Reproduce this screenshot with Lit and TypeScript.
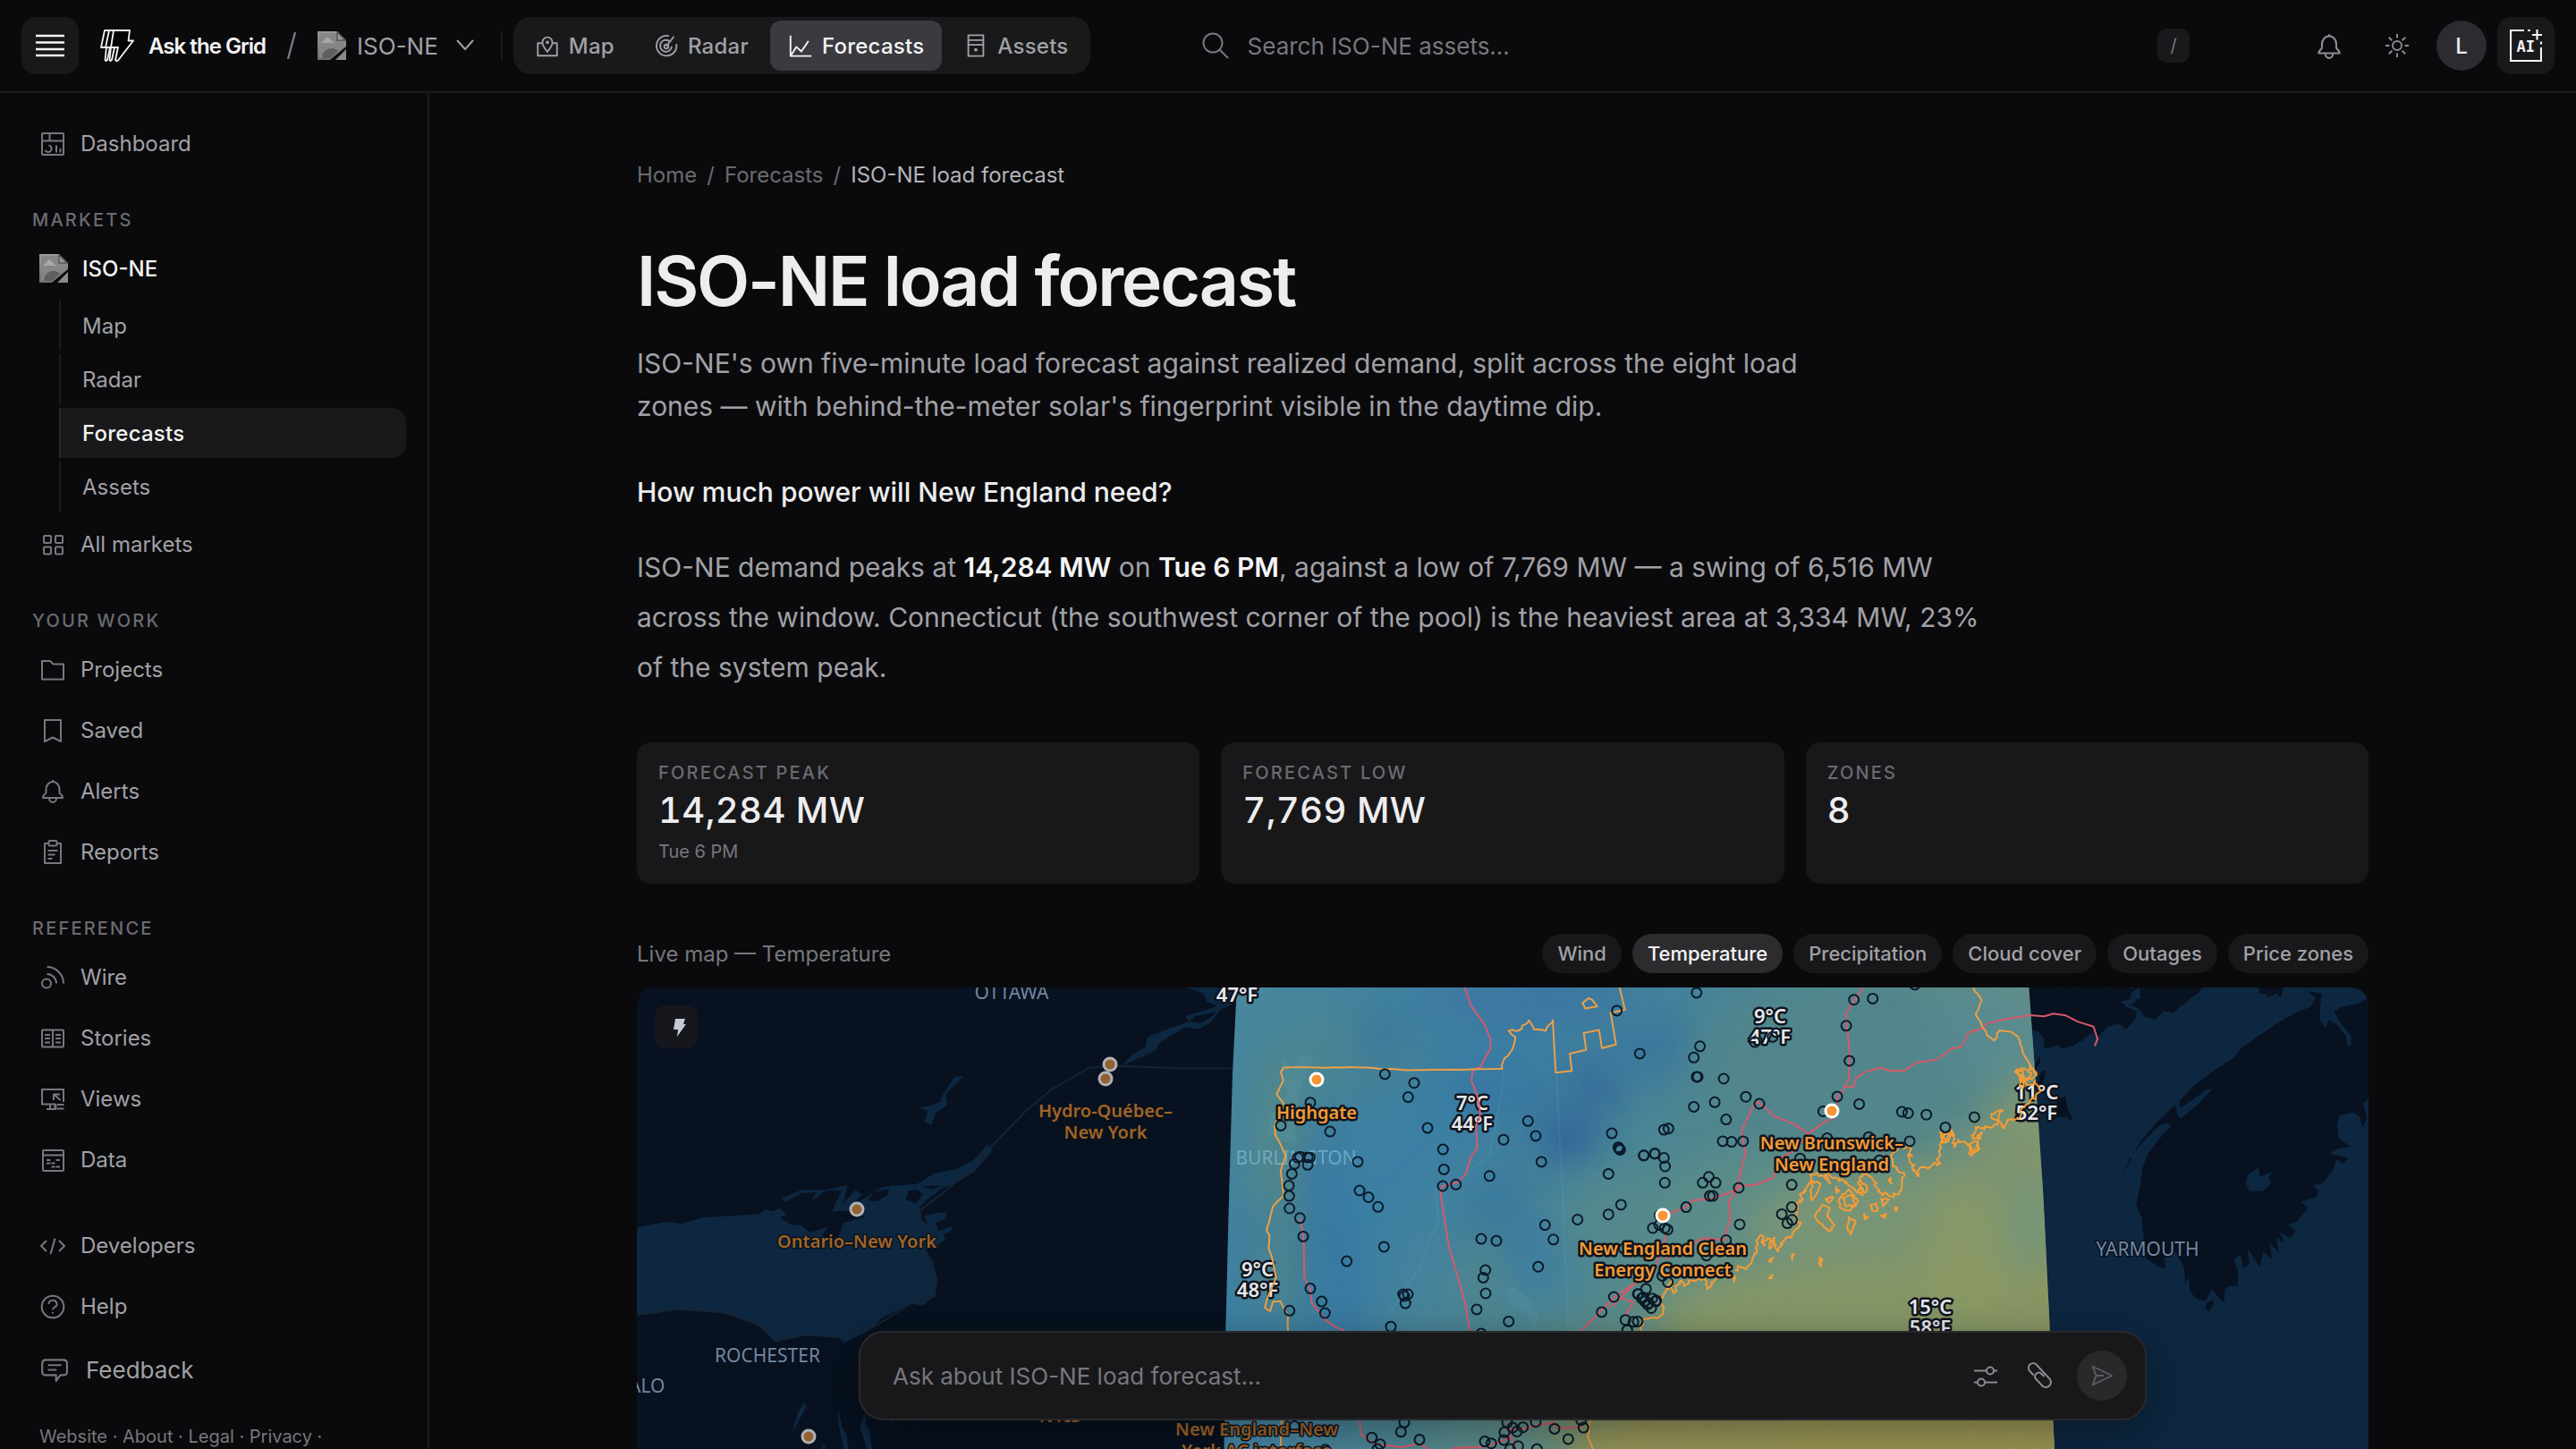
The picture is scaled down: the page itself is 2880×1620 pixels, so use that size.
import { LitElement, html, svg, css, nothing } from "lit";
import { customElement, state } from "lit/decorators.js";

/* ---------- icons ---------- */

const sideIcons: Record<string, unknown> = {
  dashboard: svg`<rect x="3" y="4" width="24" height="24" rx="1"/><path d="M3 12.500h24M11.500 4v8.500M10.500 17.500a3.800 3.800 0 1 1-4 5.500M19 17.500v8M23.500 21v4.500"/>`,
  grid: svg`<rect x="5" y="6" width="8" height="8" rx="1"/><rect x="18" y="6" width="8" height="8" rx="1"/><rect x="5" y="18.500" width="8" height="8" rx="1"/><rect x="18" y="18.500" width="8" height="8" rx="1"/>`,
  folder: svg`<path d="M3 6h9l3.500 3.500H27V26.500H3z"/>`,
  bookmark: svg`<path d="M6 4h18v24l-9-4.500L6 28z"/>`,
  bell: svg`<path d="M15 3v2M7.500 17v-3.500a7.500 8.500 0 0 1 15 0V17c0 2 3.500 2.500 3.500 6H4c0-3.500 3.500-4 3.500-6zM11 23.500a4 4.500 0 0 0 8 0"/>`,
  clipboard: svg`<path d="M10 6H6v22h18V6h-4"/><rect x="10.500" y="3" width="9" height="5.500" rx="1"/><path d="M9.500 14h11M9.500 18.500h8M9.500 23h5"/>`,
  wire: svg`<circle cx="8" cy="22.500" r="5"/><path d="M8.500 4A18.500 18.500 0 0 1 27 22.500M8.500 12A10.500 10.500 0 0 1 19 22.500"/>`,
  stories: svg`<rect x="3" y="6.500" width="24" height="19" rx="1"/><path d="M15 6.500v19M6 12h6M6 16h6M6 20.500h6M18 12h6M18 16h6M18 20.500h6"/>`,
  views: svg`<path d="M27 19V5H3v16.500h15.500M12 21.500V27M17.500 21.500V27M8 27h10.500v-5.500M20 22h7.500M20 26.500h7.500M23.500 17l-7-6.500M16 17v-6.500h7"/>`,
  data: svg`<rect x="4" y="5" width="23" height="23" rx="1"/><path d="M4 10.500h23M8 16h4.500M18.500 16h4.500M8 19.500h4.500M13.500 19.500h4M18.500 23.500h4.500M13.500 23.500h4"/>`,
  code: svg`<path d="M8 10l-6 6 6 6M22 10l6 6-6 6M17.500 7.500L12.500 25"/>`,
  help: svg`<circle cx="15" cy="16" r="12.300"/><path d="M10.500 13a4.500 4 0 1 1 6.500 3.400c-1.400.8-2 1.300-2 3M15 22v1.500"/>`,
  feedback: svg`<path d="M5 5h20q4 0 4 4v8q0 4-4 4h-3l-4.500 6v-6H7q-4 0-4-4V9q0-4 4-4M9 10.500h14M9 15.500h9"/>`,
};

const icon = (body: unknown, size = 30, cls = "ico") =>
  html`<svg class=${cls} width=${size} height=${size} viewBox="0 0 30 30" aria-hidden="true">${body}</svg>`;

const brokenImage = html`<svg class="broken" width="32" height="32" viewBox="0 0 32 32" aria-hidden="true">
  <defs><linearGradient id="bi" x1="0" y1="0" x2="0" y2="1"><stop offset="0" stop-color="#9a9a9a"/><stop offset="1" stop-color="#6f6f6f"/></linearGradient></defs>
  <path d="M0 0h22l10 10v7L14 32H0z" fill="url(#bi)"/>
  <path d="M32 20v12H20z" fill="#8a8a8a"/>
  <path d="M2 2h19v8h9v6L13 30H2z" fill="#868686"/>
  <path d="M4 13l7-7 8 7z" fill="#a8a8a8"/>
  <path d="M5 30c0-7 5-11 11-11 3 0 5 1 7 3l-9 8z" fill="#5f5f5f"/>
  <path d="M22 1v9h9z" fill="#9a9a9a" stroke="#555" stroke-width="1.500"/>
</svg>`;

/* ---------- map geometry ---------- */

type Tile = { x: number; y: number; sx: number; sy: number };
const WEST: Tile = { x: 700, y: 1030, sx: 2.24, sy: 2.657 };
const MID: Tile = { x: 1340, y: 1090, sx: 3, sy: 2.958 };
const COAST: Tile = { x: 1800, y: 1090, sx: 2.904, sy: 2.958 };
const EAST: Tile = { x: 2200, y: 1090, sx: 3, sy: 2.958 };

const nums = (s: string) => s.trim().split(/[\s,]+/).map(Number);

/** Projects "x,y x,y ..." from a tile into map space. */
function project(t: Tile, s: string): [number, number][] {
  const n = nums(s);
  const out: [number, number][] = [];
  for (let i = 0; i + 1 < n.length; i += 2) out.push([t.x + n[i] / t.sx, t.y + n[i + 1] / t.sy]);
  return out;
}

/** Breaks each segment into short uneven steps, for ragged shorelines. */
function roughen(p: [number, number][], amp: number, step: number): [number, number][] {
  let seed = 7;
  const rnd = () => ((seed = (seed * 16807) % 2147483647) / 2147483647) - 0.5;
  const out: [number, number][] = [p[0]];
  for (let i = 1; i < p.length; i++) {
    const [ax, ay] = p[i - 1];
    const [bx, by] = p[i];
    const n = Math.max(1, Math.round(Math.hypot(bx - ax, by - ay) / step));
    for (let k = 1; k < n; k++)
      out.push([ax + ((bx - ax) * k) / n + rnd() * amp, ay + ((by - ay) * k) / n + rnd() * amp]);
    out.push([bx, by]);
  }
  return out;
}

function line(t: Tile, s: string, opts: { close?: boolean; amp?: number; step?: number } = {}) {
  let p = project(t, s);
  if (opts.close) p = [...p, p[0]];
  if (opts.amp) p = roughen(p, opts.amp, opts.step ?? 4);
  return "M" + p.map(([x, y]) => `${x.toFixed(1)} ${y.toFixed(1)}`).join("L") + (opts.close ? "Z" : "");
}
const area = (t: Tile, s: string, amp = 0) => line(t, s, { close: true, amp, step: 5 });

const WATER = [
  area(WEST, "27,910 100,892 140,898 190,880 330,870 350,855 365,862 385,852 402,870 385,880 412,900 440,903 460,925 505,908 490,935 530,945 545,895 600,878 560,860 515,862 540,800 500,800 465,832 475,805 440,808 398,834 390,822 440,797 500,798 555,783 543,840 575,798 590,812 560,850 640,790 730,780 770,750 830,735 870,710 905,662 918,680 900,705 870,745 830,775 790,795 750,830 735,850 737,885 755,900 748,875 780,866 803,866 800,885 775,895 782,920 820,905 812,922 795,930 800,945 770,970 750,975 770,1015 778,1080 770,1115 745,1142 710,1135 640,1180 610,1215 545,1252 535,1240 500,1230 430,1232 375,1250 330,1200 250,1165 130,1155 27,1172"),
  area(WEST, "1240,430 1268,395 1300,375 1305,345 1360,318 1410,298 1400,282 1440,268 1480,252 1455,240 1445,215 1405,197 1568,197 1515,250 1490,262 1465,300 1435,320 1400,315 1335,362 1325,385"),
  area(WEST, "845,460 822,462 795,510 788,535 760,548 732,553 755,565 746,598 765,604 775,570 805,545 800,515"),
  area(WEST, "445,1428 430,1460 415,1522 428,1495 452,1440"),
  area(WEST, "530,1440 533,1500 545,1568 556,1568 553,1530 540,1500"),
  area(WEST, "600,1460 585,1500 603,1568 616,1568 608,1510 598,1490"),
  area(WEST, "652,1455 675,1506 668,1480"),
  area(WEST, "712,1460 735,1506 724,1478"),
  area(WEST, "495,1550 490,1568 500,1568"),
];
const ISLES = [
  area(WEST, "605,830 620,805 660,795 652,815 628,832"),
  area(WEST, "700,825 708,800 730,798 742,812 725,838"),
  area(WEST, "738,788 790,785 768,796"),
  area(WEST, "1412,297 1425,282 1480,268 1465,285 1440,303"),
];
const MARITIME_LAND = [
  area(EAST, "150,41 582,41 552,55 545,78 512,90 535,108 565,122 555,152 528,180 505,162 470,172 440,202 415,190 385,218 350,235 320,245 300,230 280,240 262,243 256,215 235,185 150,170", 3),
  area(EAST, "578,41 790,41 740,85 690,125 655,120 630,148 592,138 570,110 542,98 580,75", 2),
  area(EAST, "1140,55 1188,62 1182,100 1180,145 1200,178 1210,150 1240,165 1270,205 1272,235 1287,232 1285,200 1250,160 1228,122 1255,105 1310,95 1344,75 1344,410 1325,425 1340,470 1325,505 1312,465 1290,455 1245,465 1238,500 1245,540 1282,568 1240,575 1212,590 1245,600 1275,604 1262,624 1235,610 1225,645 1190,690 1155,695 1177,712 1170,735 1118,750 1140,770 1105,815 1072,828 1098,845 1085,870 1045,850 1062,888 1035,868 1042,918 1012,882 1020,940 992,915 978,965 955,930 938,905 945,955 925,970 915,925 893,940 907,985 905,1030 880,1028 862,1040 860,1082 835,1060 822,1038 795,1078 765,1070 745,1045 742,1000 730,1020 725,965 700,920 680,905 660,940 662,972 640,965 600,938 588,850 583,800 565,760 578,700 585,640 605,590 640,545 682,498 668,488 640,500 580,560 555,592 580,550 640,482 695,430 705,465 715,475 770,430 822,376 800,380 760,408 712,440 712,415 760,365 820,320 890,275 920,240 1030,165 1090,130 1150,105 1168,75"),
  area(EAST, "975,41 1060,41 1050,75 1035,60 1010,74 998,62 980,62"),
  area(EAST, "512,680 545,603 550,606 520,662"),
  area(EAST, "222,305 240,268 243,290 228,312"),
  area(EAST, "235,362 245,320 262,316 252,362"),
  area(EAST, "275,492 285,440 310,405 328,402 334,440 355,485 330,470 300,468"),
  area(EAST, "797,1105 800,1085 825,1073 822,1092 810,1114"),
];
const LAKE = area(EAST, "932,690 940,660 975,636 980,668 1025,648 1008,668 1017,690 990,714 945,716");

const BORDERS = [
  line(WEST, "918,665 1000,565 1065,500 1160,435 1240,430 1390,437 1525,437"),
  line(WEST, "27,1168 130,1150 240,1160 330,1198 380,1245 450,1228 535,1236 620,1205 720,1130 772,1115 778,1060 750,975 735,860 800,800 860,740 918,665"),
];

const PALE_WATER = [
  area(MID, "290,270 275,320 300,400 240,470 235,540 330,560 320,480 350,350 385,270 340,265 310,330"),
  area(MID, "1035,1040 1060,1030 1110,1070 1140,1120 1125,1165 1100,1115 1050,1095 1035,1075"),
];
const PALE_LINES = [
  line(MID, "795,710 805,820 770,880 740,970 700,1030 640,1120"),
  line(MID, "1200,330 1220,700 1240,1176"),
  line(MID, "1022,315 1015,400 975,600 900,655"),
];

const ORANGE = [
  line(MID, "300,1176 300,1130 285,1100 275,1080 250,1080 240,1112 222,1100 238,1050 260,1000 245,930 235,905 238,860 228,845 250,765 285,730 275,650 292,600 270,550 258,530 255,500 285,425 262,395 284,350 276,322 285,306 540,306 700,315 1020,311", { amp: 1, step: 9 }),
  line(MID, "1020,311 1022,285 1050,250 1062,205 1040,185 1070,185 1108,150 1125,180 1165,185 1188,148", { amp: 3, step: 4 }),
  line(MID, "1188,148 1198,323 1252,317 1245,260 1300,248 1292,192 1343,182 1353,242 1400,230 1382,125 1430,115 1412,41"),
  line(MID, "1288,93 1308,77 1320,82 1337,104 1297,111", { close: true }),
  line(MID, "278,1472 275,1568"),
  line(MID, "1315,1472 1306,1530 1322,1568", { amp: 2 }),
  line(COAST, "1180,41 1207,85 1187,130 1225,200 1247,217 1265,183 1300,187 1325,205 1340,255 1365,300 1385,335", { amp: 2, step: 5 }),
];
const SHORE = [
  line(COAST, "1365,300 1385,330 1350,350 1315,320 1340,312 1330,345 1355,365 1380,350 1398,385 1360,425 1330,450 1325,475 1290,480 1278,508 1265,485 1275,450 1238,460 1258,480 1240,505 1215,512 1185,505 1180,540 1208,520 1195,570 1175,597 1163,560 1130,545 1118,570 1108,512 1090,550 1072,520 1075,570 1065,625 1020,635 1002,665 972,615 978,575 940,570 912,600 930,640 955,655 940,715 905,730 870,715 850,670 820,660 805,690 822,728 780,700 730,670 700,660 715,690 690,665 650,660 640,700 615,745 605,800 620,820 595,850 570,870 545,915 535,870 520,905 510,870 500,895 492,860 475,880 470,920 445,965 405,975", { amp: 6, step: 3 }),
  line(COAST, "345,1005 315,1040 305,1005 255,1010 240,1030 232,1010 205,1052 200,1010 180,1050 165,1085 172,1112 160,1132 105,1142 103,1176", { amp: 5, step: 3 }),
  ...[
    "660,680 683,690 672,720 655,745 650,715",
    "665,800 690,760 712,770 705,800 728,830 710,847 680,820",
    "745,740 775,710 805,750 775,780 745,770",
    "755,735 785,730 795,760 765,765",
    "775,800 797,815 780,858 770,835",
    "815,680 835,700 830,720 812,705",
    "845,760 865,755 868,780 850,778",
    "880,740 905,742 885,765",
    "880,795 897,790 892,805",
    "926,768 933,770 931,780 925,778",
    "700,740 725,735 712,752",
    "515,945 530,935 523,950",
    "592,925 597,922 592,942",
    "680,935 690,940 685,965 679,955",
    "517,1003 527,992 524,1003",
    "402,995 408,1000 404,1013",
    "825,790 838,800 828,808",
    "905,680 912,670 915,690",
    "1320,312 1345,310 1370,325 1350,345 1325,330",
    "1332,345 1345,350 1340,375 1330,365",
    "1165,560 1190,550 1200,575 1175,590",
    "1075,530 1105,525 1100,550 1080,555",
    "735,700 745,712 735,720",
  ].map((s) => line(COAST, s, { close: true, amp: 3, step: 3 })),
];

const RED = [
  line(MID, "893,41 913,100 960,165 980,215 978,245 945,305 920,315 915,350 935,400 945,460 930,500 935,570 915,600 895,660 870,685 820,697 810,710 825,810 840,900 870,1000 893,1080 910,1176"),
  line(MID, "340,805 352,865 355,1000 375,1040 380,1085 425,1140 460,1165 490,1176"),
  line(MID, "1285,1176 1340,1120 1395,1065 1470,1015"),
  line(MID, "540,1472 545,1520 590,1550 680,1562 740,1550 770,1568"),
  line(MID, "850,1565 960,1560 1050,1530 1035,1480"),
  line(MID, "1030,1505 1090,1500 1190,1480 1205,1500 1285,1495"),
  line(MID, "1050,1530 1065,1568"),
  line(COAST, "822,41 795,80 765,130 770,180 778,260 775,345 755,385 737,405 735,460 720,475 690,490 645,525 600,495 530,465 500,435 480,420 465,435 427,515 440,590 415,690 418,705 385,750 390,800 372,877 300,870 180,940"),
  line(COAST, "760,370 790,370 800,340 835,318 880,307 910,317 955,317 995,290 1060,280 1110,243 1140,238 1165,190 1212,175 1225,160 1280,147 1362,133 1410,137 1440,128 1480,134 1520,155 1570,171 1583,212 1574,235"),
  line(COAST, "172,797 247,768 270,745 330,740 400,715 418,700 480,692 530,670 545,610 600,580 645,525"),
  line(COAST, "180,850 175,890 150,960 85,1015 35,1068 0,1100"),
  line(COAST, "35,1068 75,1082 50,1130"),
];

const PLANTS_MID = nums(`375,422 276,498 441,518 625,328 723,357 703,404 768,506 820,577 823,643 819,698 863,693
 341,601 333,604 373,604 366,603 366,628 322,625 313,658 303,697 304,731 305,772 340,804 351,865 534,618 540,713 570,735 602,767
 622,899 497,947 375,1037 413,1080 424,1118 305,1110 686,1056 702,1056 694,1086 690,1062 645,1163 1105,483 1131,532 1023,545
 1150,618 976,665 948,873 999,879 962,976 955,1001 963,1053 933,1106 1040,1146 948,1186 1162,827 1190,875 1139,965 1271,809
 1375,792 1417,760 1375,658 1386,524 1408,570 1414,578 1410,574 1493,597 1403,118 1480,260 1352,1115 1393,1065 1473,1055
 322,1492 425,1508 425,1570 581,1530 609,1552 600,1568 679,1511 690,1480 741,1537 960,1543 982,1549 1026,1512 1024,1538 1035,1480
 1053,1497 1088,1496 1068,1510 1072,1558 1045,1568 1131,1478 1135,1568 1194,1501 1240,1535 1291,1497 1283,1472`);
const PLANTS_COAST = nums(`281,59 292,236 272,273 281,337 285,337 369,343 272,436 340,421 377,478 441,403 485,426 738,402 692,451 809,427
 948,453 968,457 1027,462 1183,470 1089,504 973,550 792,82 853,78 767,168 777,284 990,32 470,222 528,205 175,512 190,508 110,597
 146,591 145,591 175,605 179,633 178,687 366,550 395,552 432,550 321,668 301,687 343,687 324,731 334,731 418,704 247,768 421,825
 377,877 590,694 590,768 558,791 576,821 591,810 139,837 160,827 178,837 187,842 161,795 705,540 840,536 617,607 875,613
 313,928 45,905 170,995 188,1016 117,1038 92,1055 103,1070 113,1080 122,1090 134,1102 148,1080 137,1070 150,1077 126,1085
 108,1066 50,1141 76,1147 90,1146 56,1175`);
const plants: [number, number][] = [];
for (const [t, l] of [[MID, PLANTS_MID], [COAST, PLANTS_COAST]] as [Tile, number[]][])
  for (let i = 0; i + 1 < l.length; i += 2) plants.push([t.x + l[i] / t.sx, t.y + l[i + 1] / t.sy]);

const HEAT_EDGE = "M1383 1100L1378 1200L1374 1340L1370 1500L1367 1760H2304L2296 1600L2291 1470L2284 1330L2276 1210L2268 1100Z";
const BLOBS: [number, number, number, number, string, number][] = [
  [1500, 1180, 90, 50, "#56877f", 0.35],
  [1430, 1330, 36, 150, "#5b8a80", 0.65],
  [1400, 1380, 24, 40, "#3a7ba2", 0.6],
  [1475, 1345, 22, 80, "#3272a5", 0.6],
  [1505, 1460, 24, 70, "#3375a6", 0.6],
  [1545, 1160, 26, 40, "#336fa0", 0.5],
  [1700, 1120, 120, 26, "#3b6fa0", 0.6],
  [1680, 1220, 60, 34, "#3671a2", 0.5],
  [1752, 1272, 34, 32, "#2f629a", 0.85],
  [1785, 1215, 34, 34, "#31669b", 0.7],
  [1850, 1170, 50, 40, "#36729f", 0.6],
  [1675, 1360, 34, 60, "#34739f", 0.6],
  [1720, 1410, 50, 50, "#3a7ba4", 0.6],
  [1660, 1420, 20, 50, "#5a8a80", 0.6],
  [1810, 1370, 60, 60, "#578a8b", 0.7],
  [2060, 1200, 170, 110, "#51858c", 0.9],
  [2230, 1150, 80, 60, "#568a92", 0.8],
  [2000, 1350, 150, 60, "#5c8c88", 0.9],
  [2140, 1370, 190, 60, "#7d9674", 0.9],
  [2080, 1480, 230, 70, "#869767", 0.95],
  [2210, 1400, 60, 70, "#8f9a62", 0.7],
  [2262, 1370, 22, 60, "#6f9580", 0.7],
  [1790, 1560, 110, 60, "#759272", 0.8],
  [2050, 1620, 300, 60, "#9a9552", 0.95],
  [1900, 1600, 100, 40, "#95935a", 0.8],
  [1420, 1600, 50, 40, "#4c88a5", 0.8],
  [1660, 1600, 60, 40, "#5e8c88", 0.6],
];

const ties: { x: number; y: number; lit: boolean }[] = [
  { x: 1472, y: 1207, lit: true },
  { x: 2048, y: 1242, lit: true },
  { x: 1859, y: 1359, lit: true },
  { x: 1241, y: 1190, lit: false },
  { x: 1236, y: 1206, lit: false },
  { x: 958, y: 1352, lit: false },
  { x: 904, y: 1606, lit: false },
];
const tieLabels: { x: number; y: number; lines: string[]; lit: boolean }[] = [
  { x: 1472, y: 1251, lines: ["Highgate"], lit: true },
  { x: 2048, y: 1285, lines: ["New Brunswick–", "New England"], lit: true },
  { x: 1859, y: 1403, lines: ["New England Clean", "Energy Connect"], lit: true },
  { x: 1236, y: 1249, lines: ["Hydro-Québec–", "New York"], lit: false },
  { x: 958, y: 1395, lines: ["Ontario–New York"], lit: false },
  { x: 1185, y: 1590, lines: ["NYIS"], lit: false },
  { x: 1405, y: 1605, lines: ["New England–New", "York AC interface"], lit: false },
];
const cities: { x: number; y: number; name: string }[] = [
  { x: 1131, y: 1117, name: "OTTAWA" },
  { x: 858, y: 1523, name: "ROCHESTER" },
  { x: 698, y: 1557, name: "BUFFALO" },
  { x: 2401, y: 1404, name: "YARMOUTH" },
];
const temps: { x: number; y: number; c: string; f: string }[] = [
  { x: 1383, y: 1097, c: "8°C", f: "47°F" },
  { x: 1646, y: 1241, c: "7°C", f: "44°F" },
  { x: 1979, y: 1144, c: "9°C", f: "47°F" },
  { x: 2277, y: 1229, c: "11°C", f: "52°F" },
  { x: 1406, y: 1427, c: "9°C", f: "48°F" },
  { x: 2158, y: 1469, c: "15°C", f: "58°F" },
];

@customElement("weather-map")
export class WeatherMap extends LitElement {
  static styles = css`
    :host { display: block; position: relative; overflow: hidden; border-radius: 20px; background: #07111f; }
    .canvas { display: block; width: 100%; height: auto; }
    .water { fill: #0d2740; }
    .land { fill: #07111f; }
    .border { fill: none; stroke: #172333; stroke-width: 2; }
    .pale { fill: #6fb4c4; opacity: 0.13; }
    .paleline { fill: none; stroke: #7fc0d8; stroke-width: 2; opacity: 0.1; }
    .orange { fill: none; stroke: #ec9f47; stroke-width: 2; stroke-linejoin: round; }
    .shore { fill: none; stroke: #f79c35; stroke-width: 2; stroke-linejoin: round; }
    .red { fill: none; stroke: #d7596b; stroke-width: 2; stroke-linejoin: round; }
    .plant { fill: none; stroke: #0a1a2a; stroke-width: 2; }
    .tie { fill: #f79433; stroke: #fff; stroke-width: 3; }
    .tie.dim { fill: #93602f; stroke: #adb2b9; }
    text { font-family: "Noto Sans", "Open Sans", sans-serif; letter-spacing: 0; text-anchor: middle; paint-order: stroke; stroke-linejoin: round; }
    .city { font-size: 21px; fill: #75869f; stroke: #07111f; stroke-width: 3; }
    .city.faded { fill: #7ab8d0; stroke: none; opacity: 0.75; }
    .temp { font-size: 22px; font-weight: 600; fill: #e6e9ee; stroke: #10141c; stroke-width: 5; }
    .tielabel { font-size: 20px; font-weight: 600; fill: #f79a36; stroke: #11151b; stroke-width: 5; }
    .tielabel.dim { fill: #a06428; stroke: #0b121b; stroke-width: 3; }
    .tool { position: absolute; top: 20px; left: 20px; width: 48px; height: 48px; padding: 0; border: 0; border-radius: 12px; background: #15171c; display: grid; place-items: center; }
  `;
  render() {
    return html`
      <svg class="canvas" viewBox="712 1104 1936 640" role="img" aria-label="Temperature map">
        <defs>
          <clipPath id="heat"><path d=${HEAT_EDGE} /></clipPath>
          <filter id="soft" x="-100%" y="-100%" width="300%" height="300%"><feGaussianBlur stdDeviation="20" /></filter>
          <linearGradient id="base" x1="0" y1="0" x2="1" y2="0.6">
            <stop offset="0" stop-color="#4a889c" /><stop offset="0.3" stop-color="#3c7fa4" />
            <stop offset="0.55" stop-color="#51888f" /><stop offset="0.8" stop-color="#7d9674" /><stop offset="1" stop-color="#98955a" />
          </linearGradient>
        </defs>
        ${WATER.map((d) => svg`<path class="water" d=${d} />`)}
        ${ISLES.map((d) => svg`<path class="land" d=${d} />`)}
        <rect class="water" x="2255" y="1104" width="400" height="640" />
        ${MARITIME_LAND.map((d) => svg`<path class="land" d=${d} />`)}
        <path class="water" d=${LAKE} />
        ${BORDERS.map((d) => svg`<path class="border" d=${d} />`)}
        <g clip-path="url(#heat)">
          <rect x="1360" y="1100" width="950" height="650" fill="url(#base)" />
          ${BLOBS.map(([x, y, rx, ry, c, o]) => svg`<ellipse cx=${x} cy=${y} rx=${rx} ry=${ry} fill=${c} opacity=${o} filter="url(#soft)" />`)}
          ${PALE_WATER.map((d) => svg`<path class="pale" d=${d} />`)}
          ${PALE_LINES.map((d) => svg`<path class="paleline" d=${d} />`)}
        </g>
        <text class="city faded" x="1449" y="1302">BURLINGTON</text>
        ${cities.map((c) => svg`<text class="city" x=${c.x} y=${c.y}>${c.name}</text>`)}
        ${temps.map((t) => svg`<text class="temp" x=${t.x} y=${t.y}>${t.c}</text><text class="temp" x=${t.x} y=${t.y + 23}>${t.f}</text>`)}
        ${RED.map((d) => svg`<path class="red" d=${d} />`)}
        ${ORANGE.map((d) => svg`<path class="orange" d=${d} />`)}
        ${SHORE.map((d) => svg`<path class="shore" d=${d} />`)}
        ${plants.map(([x, y]) => svg`<circle class="plant" cx=${x.toFixed(1)} cy=${y.toFixed(1)} r="5.500" />`)}
        ${ties.map((t) => svg`<circle class="tie ${t.lit ? "" : "dim"}" cx=${t.x} cy=${t.y} r="7" />`)}
        ${tieLabels.map((l) => l.lines.map((s, i) => svg`<text class="tielabel ${l.lit ? "" : "dim"}" x=${l.x} y=${l.y + i * 24}>${s}</text>`))}
      </svg>
      <button class="tool" aria-label="Grid layers">
        <svg width="24" height="24" viewBox="0 0 24 24" aria-hidden="true"><path d="M11 3h11l-2 6h3L13 23l1-8H9z" fill="#c3c9d4" /></svg>
      </button>
    `;
  }
}

/* ---------- page ---------- */

const tabs = [
  { name: "Map", body: svg`<path d="M8 12H3.500v15h23V12H22M15 22.500c-4-5-6-7.500-6-11a6 6.500 0 0 1 12 0c0 3.500-2 6-6 11z"/><circle cx="15" cy="11" r="1"/>` },
  { name: "Radar", body: svg`<path d="M18 3.500A12 12 0 1 0 27 13M18.500 9.500A7 7 0 1 0 21.500 16M15 16L24 4"/><circle cx="15" cy="16" r="2.500"/>` },
  { name: "Forecasts", body: svg`<path d="M3 3v24.500h25M4 26l6-9.500 6 5.500L24.500 9.500"/>` },
  { name: "Assets", body: svg`<path d="M6 2.500h18v25H6zM6 8.500h18M6 14h18"/><circle cx="15" cy="20" r="1"/>` },
];
const layers = ["Wind", "Temperature", "Precipitation", "Cloud cover", "Outages", "Price zones"];
const stats = [
  { label: "Forecast peak", value: "14,284 MW", note: "Tue 6 PM" },
  { label: "Forecast low", value: "7,769 MW", note: "" },
  { label: "Zones", value: "8", note: "" },
];

@customElement("app-root")
export class AppRoot extends LitElement {
  @state() private layer = "Temperature";

  static styles = css`
    :host {
      display: grid; grid-template-rows: auto minmax(0, 1fr); height: 100vh; overflow: hidden;
      background: #0a0a0c; color: #a1a1a6; font-family: Inter, "Liberation Sans", sans-serif; font-size: 24px;
    }
    * { box-sizing: border-box; }
    a { color: inherit; text-decoration: none; }
    button { font: inherit; letter-spacing: inherit; color: inherit; border: 0; background: none; padding: 0; cursor: pointer; }
    input { font: inherit; letter-spacing: inherit; color: #ededef; border: 0; background: none; padding: 0; outline: 0; min-width: 0; flex: 1; }
    input::placeholder { color: #77777d; opacity: 1; }
    svg { flex: none; }
    .ico { fill: none; stroke: currentColor; stroke-width: 2; stroke-linejoin: round; }

    .top { display: flex; align-items: center; height: 104px; padding: 0 24px; border-bottom: 2px solid #1c1c1f; }
    .square { display: grid; place-items: center; width: 64px; height: 64px; border-radius: 16px; background: #19191b; color: #f4f4f5; }
    .brand { display: flex; align-items: center; gap: 16px; margin-left: 24px; color: #f4f4f5; font-weight: 600; letter-spacing: -0.04em; white-space: nowrap; }
    .market { display: flex; align-items: center; gap: 12px; font-size: 26px; }
    .chev { margin-left: 8px; }
    .slash { margin: 0 24px; color: #77777d; }
    .rule { width: 2px; height: 32px; margin: 0 12px 0 30px; background: #1c1c1f; }
    .tabs { display: flex; gap: 4px; padding: 4px; border-radius: 20px; background: #19191b; }
    .tab { display: flex; align-items: center; gap: 10px; height: 56px; padding: 0 20px; border-radius: 12px; font-weight: 500; letter-spacing: 0.01em; }
    .tab.on { background: #3a3a3f; color: #f4f4f5; }
    .search { flex: 1; display: flex; align-items: center; gap: 20px; margin: 0 100px; padding: 0 24px; font-size: 26px; color: #77777d; }
    kbd { display: grid; place-items: center; width: 36px; height: 38px; border-radius: 10px; background: #19191b; font: inherit; font-size: 20px; }
    .actions { display: flex; align-items: center; gap: 12px; }
    .plain { display: grid; place-items: center; width: 64px; height: 64px; color: #8b8b90; }
    .avatar { width: 56px; height: 56px; border-radius: 50%; background: #2b2b30; color: #ededef; font-size: 24px; font-weight: 500; }
    .aitext { font: bold 17px "DejaVu Sans Mono", monospace; fill: #f4f4f5; stroke: none; }

    .body { display: grid; grid-template-columns: 480px minmax(0, 1fr); min-height: 0; }
    .side { border-right: 2px solid #1c1c1f; padding: 24px 24px 0; overflow: hidden; }
    .row { display: flex; align-items: center; gap: 16px; height: 64px; padding: 0 20px; }
    .row + .row { margin-top: 4px; }
    .row .ico { color: #77777d; }
    .row.market-row { color: #f4f4f5; font-weight: 500; }
    .row.feedback { gap: 20px; height: 70px; font-size: 26px; }
    .label { margin: 38px 12px 6px; font-size: 20px; line-height: 32px; font-weight: 500; letter-spacing: 0.11em; text-transform: uppercase; color: #6b6b71; }
    .sub { display: grid; gap: 4px; margin: 4px 0 4px 42px; }
    .sub a { display: flex; align-items: center; height: 56px; padding-left: 24px; border-left: 2px solid #1c1c1f; border-radius: 0 16px 16px 0; }
    .sub a.on { background: #19191b; border-color: #2a2a2d; color: #f4f4f5; font-weight: 500; letter-spacing: 0.01em; }
    .extra { margin-top: 32px; }
    .foot { margin: 24px 20px 0; font-size: 20px; line-height: 32px; color: #77777d; }

    .main { position: relative; min-width: 0; min-height: 0; }
    .scroll { height: 100%; overflow-y: auto; scrollbar-width: none; }
    .page { max-width: 2000px; margin: 0 auto; padding: 72px 32px 200px; }
    .crumbs { display: flex; gap: 11px; line-height: 40px; color: #6b6b71; }
    .crumbs .here { color: #b4b4b9; }
    h1 { margin: 54px 0 24px; font-size: 77px; line-height: 88px; font-weight: 600; letter-spacing: -0.028em; color: #ededef; }
    .lead { margin: 0; max-width: 1340px; font-size: 30px; line-height: 48px; }
    h2 { margin: 52px 0 36px; font-size: 30px; line-height: 40px; font-weight: 500; color: #ededef; }
    .story { margin: 0; max-width: 1520px; font-size: 30px; line-height: 56px; }
    .story strong { font-weight: 600; color: #f4f4f5; }
    .stats { display: grid; grid-template-columns: repeat(3, 1fr); gap: 24px; margin: 56px 0; }
    .stat { padding: 20px 24px 22px; border-radius: 16px; background: #18181a; font-size: 20px; line-height: 28px; color: #77777d; }
    .stat .name { font-weight: 500; letter-spacing: 0.11em; text-transform: uppercase; color: #6b6b71; }
    .stat .value { margin: 4px 0 8px; font-size: 40px; line-height: 48px; font-weight: 500; letter-spacing: 0.01em; font-variant-numeric: tabular-nums; color: #ededef; }
    .maphead { display: flex; align-items: center; justify-content: space-between; margin-bottom: 16px; color: #77777d; }
    .chips { display: flex; gap: 12px; }
    .chip { height: 44px; padding: 0 17px; border-radius: 22px; background: #18181a; color: #a1a1a6; font-size: 22px; font-weight: 500; }
    .chip.on { background: #2c2c2e; color: #f4f4f5; }

    .dock { position: absolute; left: 0; right: 0; bottom: 32px; display: flex; justify-content: center; padding: 0 32px; }
    .ask { display: flex; align-items: center; width: 100%; max-width: 1440px; height: 100px; padding: 0 20px 0 36px; border: 2px solid #29292b; border-radius: 28px; background: #18181a; box-shadow: 0 12px 48px rgba(0, 0, 0, 0.35); font-size: 26px; }
    .ask .small { display: grid; place-items: center; width: 60px; height: 60px; color: #8b8b90; }
    .ask .send { display: grid; place-items: center; width: 56px; height: 56px; margin-left: 12px; border-radius: 50%; background: #29292b; color: #5c5c61; }
  `;

  private row(name: string, key: string) {
    return html`<a class="row" href="#">${icon(sideIcons[key])}<span>${name}</span></a>`;
  }

  private header() {
    return html`<header class="top">
      <button class="square" aria-label="Menu">
        <svg width="32" height="32" viewBox="0 0 32 32"><path d="M0 5h32M0 12.500h32M0 20h32M0 27h32" stroke="currentColor" stroke-width="2.500" /></svg>
      </button>
      <a class="brand" href="#">
        <svg width="38" height="38" viewBox="0 0 38 38" fill="#000" stroke="#f4f4f5" stroke-width="1.800" stroke-linejoin="round" aria-hidden="true">
          <path d="M5 2h6l-3 19 3 .5L8 35l-1.500 1-1-1L7 21H1z" />
          <path d="M10 2h6l-3 19h3l-3 14-1.500 1-1-1L12 21H6z" />
          <path d="M15 2h18l-1.500 11.500H37L20 35.500l-2 .8-1-1.300L20 21H12z" />
        </svg>
        <span>Ask the Grid</span>
      </a>
      <svg class="slash" width="10" height="32" viewBox="0 0 10 32" aria-hidden="true"><path d="M9 1L1 31" stroke="currentColor" stroke-width="2.500" /></svg>
      <button class="market">${brokenImage}<span>ISO-NE</span>
        <svg class="chev" width="20" height="14" viewBox="0 0 20 14" aria-hidden="true"><path d="M1 1l9 10 9-10" fill="none" stroke="currentColor" stroke-width="2" /></svg>
      </button>
      <span class="rule"></span>
      <nav class="tabs">
        ${tabs.map((t) => html`<a class="tab ${t.name === "Forecasts" ? "on" : ""}" href="#">${icon(t.body, 28)}<span>${t.name}</span></a>`)}
      </nav>
      <label class="search">
        <svg width="32" height="32" viewBox="0 0 32 32" fill="none" stroke="currentColor" stroke-width="2" aria-hidden="true"><circle cx="13" cy="13" r="10.500" /><path d="M20.500 20.500L30 30" /></svg>
        <input type="search" aria-label="Search ISO-NE assets" placeholder="Search ISO-NE assets..." />
        <kbd>/</kbd>
      </label>
      <div class="actions">
        <button class="plain" aria-label="Notifications">${icon(sideIcons.bell, 32)}</button>
        <button class="plain" aria-label="Theme">${icon(svg`<circle cx="15" cy="15" r="5"/><path d="M15 2v4.500M15 23.500V28M2 15h4.500M23.500 15H28M5.800 5.800l3.500 3.500M20.700 20.700l3.500 3.500M5.800 24.200l3.500-3.500M20.700 9.300l3.500-3.500"/>`)}</button>
        <button class="avatar">L</button>
        <button class="square" aria-label="AI assistant">
          <svg width="36" height="36" viewBox="0 0 36 36" aria-hidden="true">
            <path d="M16 1H1v34h34V20M35 13.500v3M20 1h3M30.500 0v11.500M25 6h11" fill="none" stroke="currentColor" stroke-width="2.200" />
            <text class="aitext" x="7.500" y="25">AI</text>
          </svg>
        </button>
      </div>
    </header>`;
  }

  private sidebar() {
    return html`<aside class="side">
      ${this.row("Dashboard", "dashboard")}
      <div class="label">Markets</div>
      <a class="row market-row" href="#">${brokenImage}<span>ISO-NE</span></a>
      <nav class="sub">
        ${["Map", "Radar", "Forecasts", "Assets"].map((n) => html`<a class=${n === "Forecasts" ? "on" : ""} href="#">${n}</a>`)}
      </nav>
      ${this.row("All markets", "grid")}
      <div class="label">Your work</div>
      ${this.row("Projects", "folder")}${this.row("Saved", "bookmark")}${this.row("Alerts", "bell")}${this.row("Reports", "clipboard")}
      <div class="label">Reference</div>
      ${this.row("Wire", "wire")}${this.row("Stories", "stories")}${this.row("Views", "views")}${this.row("Data", "data")}
      <div class="extra">
        ${this.row("Developers", "code")}${this.row("Help", "help")}
        <a class="row feedback" href="#">${icon(sideIcons.feedback, 32)}<span>Feedback</span></a>
      </div>
      <div class="foot"><a href="#">Website</a> · <a href="#">About</a> · <a href="#">Legal</a> · <a href="#">Privacy</a> ·</div>
    </aside>`;
  }

  render() {
    return html`
      ${this.header()}
      <div class="body">
        ${this.sidebar()}
        <main class="main">
          <div class="scroll">
            <div class="page">
              <nav class="crumbs"><a href="#">Home</a><span>/</span><a href="#">Forecasts</a><span>/</span><span class="here">ISO-NE load forecast</span></nav>
              <h1>ISO-NE load forecast</h1>
              <p class="lead">ISO-NE's own five-minute load forecast against realized demand, split across the eight load zones — with behind-the-meter solar's fingerprint visible in the daytime dip.</p>
              <h2>How much power will New England need?</h2>
              <p class="story">ISO-NE demand peaks at <strong>14,284 MW</strong> on <strong>Tue 6 PM</strong>, against a low of 7,769 MW — a swing of 6,516 MW across the window. Connecticut (the southwest corner of the pool) is the heaviest area at 3,334 MW, 23% of the system peak.</p>
              <section class="stats">
                ${stats.map((s) => html`<div class="stat"><div class="name">${s.label}</div><div class="value">${s.value}</div>${s.note ? html`<div>${s.note}</div>` : nothing}</div>`)}
              </section>
              <div class="maphead">
                <span>Live map — ${this.layer}</span>
                <div class="chips">
                  ${layers.map((l) => html`<button class="chip ${l === this.layer ? "on" : ""}" @click=${() => (this.layer = l)}>${l}</button>`)}
                </div>
              </div>
              <weather-map></weather-map>
            </div>
          </div>
          <div class="dock">
            <form class="ask" @submit=${(e: Event) => e.preventDefault()}>
              <input type="text" aria-label="Ask about ISO-NE load forecast" placeholder="Ask about ISO-NE load forecast..." />
              <button class="small" type="button" aria-label="Options">${icon(svg`<path d="M2 9.500h14M24 9.500h4M2 22.500h4M14 22.500h14"/><circle cx="20" cy="9.500" r="4"/><circle cx="10" cy="22.500" r="4"/>`)}</button>
              <button class="small" type="button" aria-label="Attach link">${icon(svg`<path d="M8.500 14.500l-4-4.500a5 5 0 0 1 7-7.500L26 18a5.500 5.500 0 0 1-7.500 8.500L11 18.500a4.300 4.300 0 0 1 6-6l3.500 3.500"/>`)}</button>
              <button class="send" aria-label="Send">${icon(svg`<path d="M4 4l23 11L4 26l4-11zM8 15h9"/>`, 28)}</button>
            </form>
          </div>
        </main>
      </div>
    `;
  }
}
